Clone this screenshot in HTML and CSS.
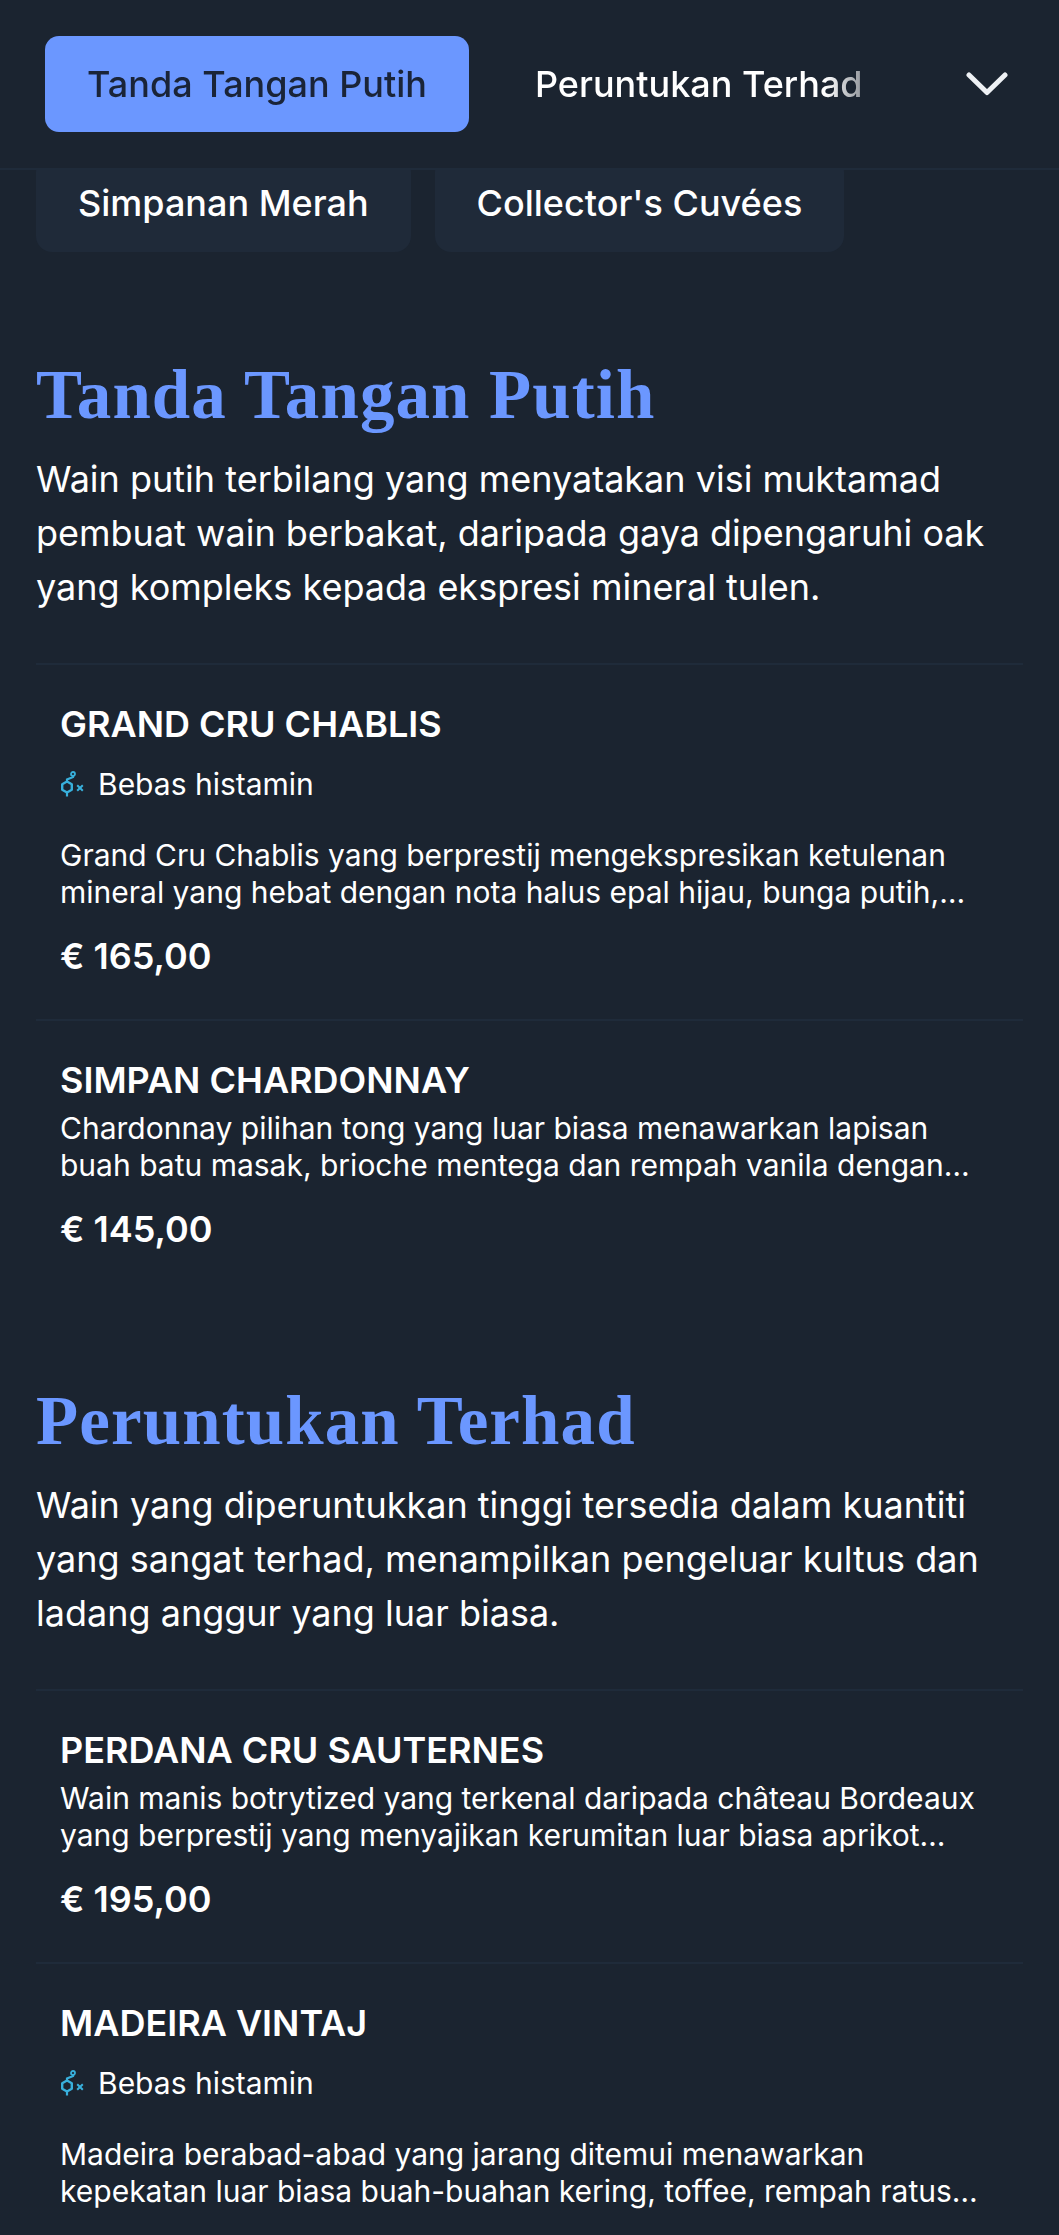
FILE: index.html
```html
<!DOCTYPE html>
<html lang="ms">
<head>
<meta charset="utf-8">
<title>Menu</title>
<link rel="stylesheet" href="styles.css">
</head>
<body>
<svg class="defs" width="0" height="0" aria-hidden="true">
  <symbol id="mol" viewBox="0 0 26 26">
    <path d="M7 10.500l4.800 2.800v5.400L7 21.500l-4.800-2.800v-5.400z" fill="none" stroke="currentColor" stroke-width="2.400" stroke-linejoin="round"/>
    <path d="M7 10.500V8.500l6-2.500V5M7 21.500V25.500" fill="none" stroke="currentColor" stroke-width="2.200"/>
    <circle cx="13" cy="3" r="2" fill="none" stroke="currentColor" stroke-width="1.800"/>
    <path d="M17.200 14.200l5.600 5.600M22.800 14.200l-5.600 5.600" fill="none" stroke="currentColor" stroke-width="2"/>
  </symbol>
</svg>
<header class="topbar">
  <nav class="tabs">
    <span class="tab tab-active">Tanda Tangan Putih</span>
    <span class="tab">Peruntukan Terhad</span>
  </nav>
  <svg class="chevron" viewBox="0 0 42 24" aria-hidden="true"><path d="M3 3l18 17.500L39 3" fill="none" stroke="currentColor" stroke-width="5" stroke-linecap="round" stroke-linejoin="round"/></svg>
</header>
<div class="morecats">
  <span class="cat">Simpanan Merah</span>
  <span class="cat">Collector's Cuvées</span>
</div>
<main>
  <section class="section">
    <h2 class="section-title">Tanda Tangan Putih</h2>
    <p class="section-desc">Wain putih terbilang yang menyatakan visi muktamad pembuat wain berbakat, daripada gaya dipengaruhi oak yang kompleks kepada ekspresi mineral tulen.</p>
    <article class="item">
      <h3 class="item-title">GRAND CRU CHABLIS</h3>
      <div class="tag"><svg class="tag-icon"><use href="#mol"/></svg><span>Bebas histamin</span></div>
      <p class="item-desc item-desc-tag">Grand Cru Chablis yang berprestij mengekspresikan ketulenan mineral yang hebat dengan nota halus epal hijau, bunga putih, dan batu kapur yang menyegarkan pada akhirnya.</p>
      <div class="price">€ 165,00</div>
    </article>
    <article class="item">
      <h3 class="item-title">SIMPAN CHARDONNAY</h3>
      <p class="item-desc">Chardonnay pilihan tong yang luar biasa menawarkan lapisan buah batu masak, brioche mentega dan rempah vanila dengan kemasan panjang dan berkrim pada akhirnya.</p>
      <div class="price">€ 145,00</div>
    </article>
  </section>
  <section class="section">
    <h2 class="section-title">Peruntukan Terhad</h2>
    <p class="section-desc">Wain yang diperuntukkan tinggi tersedia dalam kuantiti yang sangat terhad, menampilkan pengeluar kultus dan ladang anggur yang luar biasa.</p>
    <article class="item">
      <h3 class="item-title">PERDANA CRU SAUTERNES</h3>
      <p class="item-desc">Wain manis botrytized yang terkenal daripada château Bordeaux yang berprestij yang menyajikan kerumitan luar biasa aprikot manisan, madu dan kunyit yang memukau.</p>
      <div class="price">€ 195,00</div>
    </article>
    <article class="item">
      <h3 class="item-title">MADEIRA VINTAJ</h3>
      <div class="tag"><svg class="tag-icon"><use href="#mol"/></svg><span>Bebas histamin</span></div>
      <p class="item-desc item-desc-tag">Madeira berabad-abad yang jarang ditemui menawarkan kepekatan luar biasa buah-buahan kering, toffee, rempah ratus dan keasidan yang menyegarkan tanpa penghujung.</p>
      <div class="price">€ 210,00</div>
    </article>
  </section>
</main>
</body>
</html>
```
FILE: styles.css
```css
* { box-sizing: border-box; }
html, body { margin: 0; padding: 0; }
body {
  background: #1b2430;
  color: #fff;
  font-family: Inter, "Liberation Sans", sans-serif;
  height: 2235px;
  overflow: hidden;
}
.defs { position: absolute; }
.topbar {
  position: relative;
  z-index: 2;
  display: flex;
  align-items: center;
  height: 170px;
  padding: 0 51px 0 45px;
  background: #1b2430;
  border-bottom: 2px solid #1f2b3a;
}
.tabs {
  display: flex;
  gap: 24px;
  width: 820px;
  overflow: hidden;
  -webkit-mask-image: linear-gradient(to right, #000 780px, transparent 860px);
  mask-image: linear-gradient(to right, #000 780px, transparent 860px);
}
.tab {
  flex: none;
  display: flex;
  align-items: center;
  height: 96px;
  padding: 0 42px;
  font-size: 36px;
  font-weight: 500;
  border-radius: 14px;
  color: #fff;
  white-space: nowrap;
}
.tab-active { background: #6b97ff; color: #1a2438; }
.chevron { width: 42px; height: 24px; margin-left: auto; color: #eef1f4; }
.morecats {
  position: relative;
  z-index: 1;
  display: flex;
  gap: 24px;
  margin-top: -14px;
  padding-left: 36px;
}
.cat {
  display: flex;
  align-items: center;
  height: 96px;
  padding: 0 42px 3px;
  font-size: 36px;
  font-weight: 500;
  border-radius: 16px;
  background: #1f2a39;
  white-space: nowrap;
}
main { padding: 0 36px; }
.section { margin-top: 101px; }
.section + .section { margin-top: 87px; }
.section-title {
  margin: 0;
  font-family: "Liberation Serif", serif;
  font-weight: 700;
  font-size: 69px;
  letter-spacing: 1.100px;
  line-height: 84px;
  color: #6b97ff;
}
.section-desc {
  margin: 15px 0 49px;
  font-size: 36px;
  line-height: 54px;
}
.item {
  border-top: 2px solid #1f2b3a;
  padding: 39px 24px 43px;
}
.item-title {
  margin: 0;
  font-size: 36px;
  font-weight: 600;
  line-height: 40px;
}
.tag {
  display: flex;
  align-items: center;
  gap: 12px;
  margin-top: 22px;
  font-size: 30px;
  line-height: 36px;
}
.tag-icon { width: 26px; height: 26px; color: #38b0dc; }
.item-desc {
  margin: 10px 0 0;
  font-size: 30px;
  line-height: 36.500px;
  display: -webkit-box;
  -webkit-box-orient: vertical;
  -webkit-line-clamp: 2;
  overflow: hidden;
}
.item-desc-tag { margin-top: 35px; }
.price {
  margin-top: 26px;
  font-size: 36px;
  font-weight: 600;
  line-height: 40px;
}
```
